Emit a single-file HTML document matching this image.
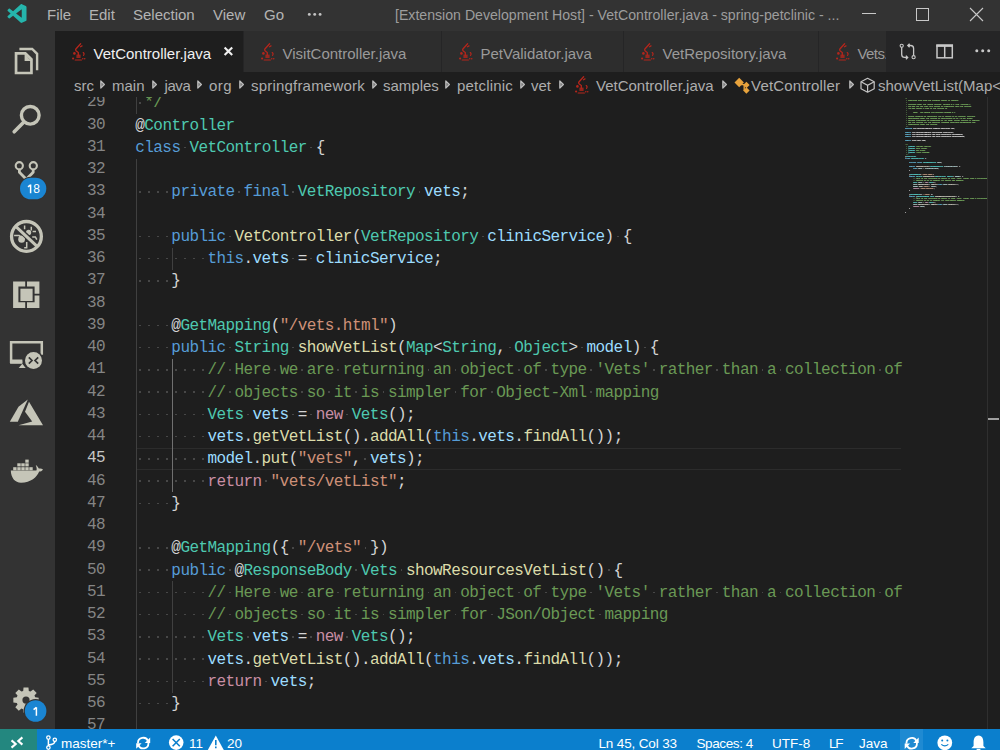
<!DOCTYPE html>
<html><head><meta charset="utf-8"><style>
*{margin:0;padding:0;box-sizing:border-box}
html,body{width:1000px;height:750px;overflow:hidden;background:#1e1e1e;font-family:"Liberation Sans",sans-serif}
.abs{position:absolute}
#title{position:absolute;left:0;top:0;width:1000px;height:31px;background:#333333}
.menu{position:absolute;top:0;height:31px;line-height:30px;font-size:15px;color:#b3b3b3}
#wtitle{position:absolute;top:0;height:31px;line-height:30px;font-size:14.13px;color:#9d9d9d;white-space:pre}
#act{position:absolute;left:0;top:31px;width:55px;height:698px;background:#333333}
#tabs{position:absolute;left:55px;top:31px;width:945px;height:41px;background:#252526}
.tab{position:absolute;top:31px;height:41px;background:#2d2d2d;border-right:1px solid #252526;overflow:hidden;white-space:nowrap}
.tab.act{background:#1e1e1e}
.ticon{position:absolute;left:17px;top:12px;width:14px;height:19px}
.ticon svg{display:block}
.ttl{position:absolute;left:38.5px;top:3px;line-height:40px;font-size:15px;color:#9a9a9a}
.tab.act .ttl{color:#f0f0f0}
.tclose{position:absolute;left:169px;top:0;line-height:40px;font-size:13px;font-weight:bold;color:#f0f0f0}
#bc{position:absolute;left:55px;top:72px;width:945px;height:25px;background:#1e1e1e;white-space:nowrap}
.bct{position:absolute;top:0;line-height:27px;font-size:15px;color:#adadad}
.chev{position:absolute;top:8px}
.chev svg{display:block}
#editor{position:absolute;left:55px;top:97px;width:945px;height:632px;overflow:hidden;background:#1e1e1e}
.ln{position:absolute;left:0;margin-top:-0.5px;width:50px;height:22.25px;line-height:22.25px;text-align:right;font-family:"Liberation Mono",monospace;font-size:16px;letter-spacing:-0.6px;color:#858585}
.ln.act{color:#c6c6c6}
.cl{position:absolute;left:80.3px;margin-top:0.5px;height:22.25px;line-height:22.25px;font-family:"Liberation Mono",monospace;font-size:16px;letter-spacing:-0.576px;white-space:pre;color:#d4d4d4}
.ws{display:inline-block;width:9.025px;height:22.25px;position:relative;vertical-align:top}
.ws::after{content:"";position:absolute;left:3.6px;top:9.8px;width:1.7px;height:1.7px;background:#474747}
.ig{position:absolute;width:1px;background:#404040}
.iga{background:#707070}
.curline{position:absolute;left:80.5px;width:765.5px;border-top:1px solid #2c2c2c;border-bottom:1px solid #2c2c2c}
#mmclip{position:absolute;left:849.8px;top:-0.2px;width:82.2px;height:140px;overflow:hidden;filter:brightness(1.35) contrast(1.1)}
#mmtext{position:absolute;left:0;top:0;font-family:"Liberation Mono",monospace;font-size:21px;font-weight:bold;letter-spacing:-3.6px;line-height:18px;white-space:pre;color:#d4d4d4;transform:scale(0.1111);transform-origin:0 0;opacity:1}
#vs{position:absolute;left:932px;top:0;width:12px;height:632px;border-left:1px solid #2f2f2f}
#status{position:absolute;left:0;top:729px;width:1000px;height:21px;background:#0b7fcd;color:#fff;font-size:13.5px;white-space:nowrap}
.st{position:absolute;top:4px;line-height:21px}
</style></head><body>
<div id="title">
 <svg class="abs" style="left:7px;top:4px" width="20" height="19" viewBox="0 0 100 100"><path fill="#25b5ac" d="M96.46 10.8L75.86 0.87C73.48-0.28 70.62 0.2 68.75 2.07L29.35 38.04L12.19 25.01C10.59 23.8 8.36 23.9 6.88 25.25L1.37 30.26C-0.45 31.92-0.45 34.78 1.36 36.44L16.25 50L1.36 63.56C-0.45 65.22-0.45 68.08 1.37 69.74L6.88 74.75C8.36 76.1 10.59 76.2 12.19 74.99L29.35 61.96L68.75 97.93C70.62 99.8 73.48 100.28 75.86 99.13L96.46 89.2C98.62 88.16 100 85.97 100 83.57V16.43C100 14.03 98.62 11.84 96.46 10.8ZM75.02 72.7L45.11 50L75.02 27.3V72.7Z"/></svg>
 <div class="menu" style="left:47px">File</div>
 <div class="menu" style="left:89px">Edit</div>
 <div class="menu" style="left:133px">Selection</div>
 <div class="menu" style="left:213px">View</div>
 <div class="menu" style="left:264px">Go</div>
 <div id="wtitle" style="left:395px">[Extension Development Host] - VetController.java - spring-petclinic - ...</div>
 <svg class="abs" style="left:862px;top:13px" width="14" height="1"><rect width="14" height="1" fill="#c8c8c8"/></svg>
 <svg class="abs" style="left:916px;top:8px" width="13" height="13"><rect x="0.5" y="0.5" width="12" height="12" fill="none" stroke="#c8c8c8"/></svg>
 <svg class="abs" style="left:969px;top:7px" width="15" height="15"><path d="M1 1L14 14M14 1L1 14" stroke="#c8c8c8" stroke-width="1.1"/></svg>
</div>
<div id="act"></div>
<div id="tabs"></div>
<div class="tab act" style="left:55px;width:189px"><span class="ticon"><svg width="14" height="19" viewBox="0 0 14 19"><g fill="none" stroke="#b3261c" stroke-width="1.3" stroke-linecap="round">
<path d="M8.6 0.8L3.9 6Q3.2 7 4.3 8L6.3 9.6V12.2"/>
<path d="M8.5 3.7L10 2.9"/>
<path d="M11.2 9.6Q12.8 10.8 11.5 12.3" stroke-width="1.2"/>
<path d="M3.2 17H9.4" stroke-width="1.2"/>
</g><g fill="#b3261c">
<circle cx="2.4" cy="10.4" r="1.3"/><rect x="4.4" y="11.6" width="4.2" height="3.4" opacity="0.8"/>
<circle cx="1.1" cy="15.5" r="1.1"/><circle cx="10.8" cy="15.8" r="0.8"/><circle cx="12.7" cy="15.8" r="0.8"/>
</g></svg></span><span class="ttl" style="letter-spacing:0px">VetController.java</span></div>
<div class="tab" style="left:244px;width:198px"><span class="ticon"><svg width="14" height="19" viewBox="0 0 14 19"><g fill="none" stroke="#b3261c" stroke-width="1.3" stroke-linecap="round">
<path d="M8.6 0.8L3.9 6Q3.2 7 4.3 8L6.3 9.6V12.2"/>
<path d="M8.5 3.7L10 2.9"/>
<path d="M11.2 9.6Q12.8 10.8 11.5 12.3" stroke-width="1.2"/>
<path d="M3.2 17H9.4" stroke-width="1.2"/>
</g><g fill="#b3261c">
<circle cx="2.4" cy="10.4" r="1.3"/><rect x="4.4" y="11.6" width="4.2" height="3.4" opacity="0.8"/>
<circle cx="1.1" cy="15.5" r="1.1"/><circle cx="10.8" cy="15.8" r="0.8"/><circle cx="12.7" cy="15.8" r="0.8"/>
</g></svg></span><span class="ttl" style="letter-spacing:0px">VisitController.java</span></div>
<div class="tab" style="left:442px;width:182px"><span class="ticon"><svg width="14" height="19" viewBox="0 0 14 19"><g fill="none" stroke="#b3261c" stroke-width="1.3" stroke-linecap="round">
<path d="M8.6 0.8L3.9 6Q3.2 7 4.3 8L6.3 9.6V12.2"/>
<path d="M8.5 3.7L10 2.9"/>
<path d="M11.2 9.6Q12.8 10.8 11.5 12.3" stroke-width="1.2"/>
<path d="M3.2 17H9.4" stroke-width="1.2"/>
</g><g fill="#b3261c">
<circle cx="2.4" cy="10.4" r="1.3"/><rect x="4.4" y="11.6" width="4.2" height="3.4" opacity="0.8"/>
<circle cx="1.1" cy="15.5" r="1.1"/><circle cx="10.8" cy="15.8" r="0.8"/><circle cx="12.7" cy="15.8" r="0.8"/>
</g></svg></span><span class="ttl" style="letter-spacing:0px">PetValidator.java</span></div>
<div class="tab" style="left:624px;width:195px"><span class="ticon"><svg width="14" height="19" viewBox="0 0 14 19"><g fill="none" stroke="#b3261c" stroke-width="1.3" stroke-linecap="round">
<path d="M8.6 0.8L3.9 6Q3.2 7 4.3 8L6.3 9.6V12.2"/>
<path d="M8.5 3.7L10 2.9"/>
<path d="M11.2 9.6Q12.8 10.8 11.5 12.3" stroke-width="1.2"/>
<path d="M3.2 17H9.4" stroke-width="1.2"/>
</g><g fill="#b3261c">
<circle cx="2.4" cy="10.4" r="1.3"/><rect x="4.4" y="11.6" width="4.2" height="3.4" opacity="0.8"/>
<circle cx="1.1" cy="15.5" r="1.1"/><circle cx="10.8" cy="15.8" r="0.8"/><circle cx="12.7" cy="15.8" r="0.8"/>
</g></svg></span><span class="ttl" style="letter-spacing:0px">VetRepository.java</span></div>
<div class="tab" style="left:819px;width:68px"><span class="ticon"><svg width="14" height="19" viewBox="0 0 14 19"><g fill="none" stroke="#b3261c" stroke-width="1.3" stroke-linecap="round">
<path d="M8.6 0.8L3.9 6Q3.2 7 4.3 8L6.3 9.6V12.2"/>
<path d="M8.5 3.7L10 2.9"/>
<path d="M11.2 9.6Q12.8 10.8 11.5 12.3" stroke-width="1.2"/>
<path d="M3.2 17H9.4" stroke-width="1.2"/>
</g><g fill="#b3261c">
<circle cx="2.4" cy="10.4" r="1.3"/><rect x="4.4" y="11.6" width="4.2" height="3.4" opacity="0.8"/>
<circle cx="1.1" cy="15.5" r="1.1"/><circle cx="10.8" cy="15.8" r="0.8"/><circle cx="12.7" cy="15.8" r="0.8"/>
</g></svg></span><span class="ttl" style="letter-spacing:-0.6px">Vets.java</span></div>
<div id="bc">
 <div class="bct" style="left:19px">src</div>
 <div class="chev" style="left:45px"><svg width="5" height="9" viewBox="0 0 5 9"><path d="M0.8 0.9L4.4 4.5L0.8 8.1Z" fill="#7a7a7a" stroke="#bdbdbd" stroke-width="1.2" stroke-linejoin="round"/></svg></div>
 <div class="bct" style="left:57px">main</div>
 <div class="chev" style="left:97px"><svg width="5" height="9" viewBox="0 0 5 9"><path d="M0.8 0.9L4.4 4.5L0.8 8.1Z" fill="#7a7a7a" stroke="#bdbdbd" stroke-width="1.2" stroke-linejoin="round"/></svg></div>
 <div class="bct" style="left:109.5px;letter-spacing:-0.4px">java</div>
 <div class="chev" style="left:142px"><svg width="5" height="9" viewBox="0 0 5 9"><path d="M0.8 0.9L4.4 4.5L0.8 8.1Z" fill="#7a7a7a" stroke="#bdbdbd" stroke-width="1.2" stroke-linejoin="round"/></svg></div>
 <div class="bct" style="left:154px;letter-spacing:0.4px">org</div>
 <div class="chev" style="left:184px"><svg width="5" height="9" viewBox="0 0 5 9"><path d="M0.8 0.9L4.4 4.5L0.8 8.1Z" fill="#7a7a7a" stroke="#bdbdbd" stroke-width="1.2" stroke-linejoin="round"/></svg></div>
 <div class="bct" style="left:196px;letter-spacing:0.2px">springframework</div>
 <div class="chev" style="left:317px"><svg width="5" height="9" viewBox="0 0 5 9"><path d="M0.8 0.9L4.4 4.5L0.8 8.1Z" fill="#7a7a7a" stroke="#bdbdbd" stroke-width="1.2" stroke-linejoin="round"/></svg></div>
 <div class="bct" style="left:328px">samples</div>
 <div class="chev" style="left:390px"><svg width="5" height="9" viewBox="0 0 5 9"><path d="M0.8 0.9L4.4 4.5L0.8 8.1Z" fill="#7a7a7a" stroke="#bdbdbd" stroke-width="1.2" stroke-linejoin="round"/></svg></div>
 <div class="bct" style="left:402px;letter-spacing:0.2px">petclinic</div>
 <div class="chev" style="left:465px"><svg width="5" height="9" viewBox="0 0 5 9"><path d="M0.8 0.9L4.4 4.5L0.8 8.1Z" fill="#7a7a7a" stroke="#bdbdbd" stroke-width="1.2" stroke-linejoin="round"/></svg></div>
 <div class="bct" style="left:476px">vet</div>
 <div class="chev" style="left:504px"><svg width="5" height="9" viewBox="0 0 5 9"><path d="M0.8 0.9L4.4 4.5L0.8 8.1Z" fill="#7a7a7a" stroke="#bdbdbd" stroke-width="1.2" stroke-linejoin="round"/></svg></div>
 <div class="abs" style="left:520px;top:4px"><svg width="14" height="19" viewBox="0 0 14 19"><g fill="none" stroke="#b3261c" stroke-width="1.3" stroke-linecap="round">
<path d="M8.6 0.8L3.9 6Q3.2 7 4.3 8L6.3 9.6V12.2"/>
<path d="M8.5 3.7L10 2.9"/>
<path d="M11.2 9.6Q12.8 10.8 11.5 12.3" stroke-width="1.2"/>
<path d="M3.2 17H9.4" stroke-width="1.2"/>
</g><g fill="#b3261c">
<circle cx="2.4" cy="10.4" r="1.3"/><rect x="4.4" y="11.6" width="4.2" height="3.4" opacity="0.8"/>
<circle cx="1.1" cy="15.5" r="1.1"/><circle cx="10.8" cy="15.8" r="0.8"/><circle cx="12.7" cy="15.8" r="0.8"/>
</g></svg></div>
 <div class="bct" style="left:541px">VetController.java</div>
 <div class="chev" style="left:667px"><svg width="5" height="9" viewBox="0 0 5 9"><path d="M0.8 0.9L4.4 4.5L0.8 8.1Z" fill="#7a7a7a" stroke="#bdbdbd" stroke-width="1.2" stroke-linejoin="round"/></svg></div>
 <div class="bct" style="left:696px;letter-spacing:0.2px">VetController</div>
 <div class="chev" style="left:794px"><svg width="5" height="9" viewBox="0 0 5 9"><path d="M0.8 0.9L4.4 4.5L0.8 8.1Z" fill="#7a7a7a" stroke="#bdbdbd" stroke-width="1.2" stroke-linejoin="round"/></svg></div>
 <div class="bct" style="left:823px">showVetList(Map&lt;String, Object&gt; model)</div>
</div>
<div id="editor">
 <div class="curline" style="top:350.75px;height:22.25px"></div>
 <div class="ig" style="left:81.1px;top:-5.25px;height:22.25px"></div>
<div class="ig" style="left:81.1px;top:61.50px;height:578.50px"></div>
<div class="ig" style="left:117.2px;top:150.50px;height:22.25px"></div>
<div class="ig iga" style="left:117.2px;top:261.75px;height:133.50px"></div>
<div class="ig" style="left:117.2px;top:484.25px;height:111.25px"></div>
 <div class="ln" style="top:-5.25px">29</div>
<div class="cl" style="top:-5.25px"><i class="ws"></i><span style="color:#6a9955">*/</span></div>
<div class="ln" style="top:17.00px">30</div>
<div class="cl" style="top:17.00px"><span style="color:#d4d4d4">@</span><span style="color:#4ec9b0">Controller</span></div>
<div class="ln" style="top:39.25px">31</div>
<div class="cl" style="top:39.25px"><span style="color:#569cd6">class</span><i class="ws"></i><span style="color:#4ec9b0">VetController</span><i class="ws"></i><span style="color:#d4d4d4">{</span></div>
<div class="ln" style="top:61.50px">32</div>
<div class="cl" style="top:61.50px"></div>
<div class="ln" style="top:83.75px">33</div>
<div class="cl" style="top:83.75px"><i class="ws"></i><i class="ws"></i><i class="ws"></i><i class="ws"></i><span style="color:#569cd6">private</span><i class="ws"></i><span style="color:#569cd6">final</span><i class="ws"></i><span style="color:#4ec9b0">VetRepository</span><i class="ws"></i><span style="color:#9cdcfe">vets</span><span style="color:#d4d4d4">;</span></div>
<div class="ln" style="top:106.00px">34</div>
<div class="cl" style="top:106.00px"></div>
<div class="ln" style="top:128.25px">35</div>
<div class="cl" style="top:128.25px"><i class="ws"></i><i class="ws"></i><i class="ws"></i><i class="ws"></i><span style="color:#569cd6">public</span><i class="ws"></i><span style="color:#dcdcaa">VetController</span><span style="color:#d4d4d4">(</span><span style="color:#4ec9b0">VetRepository</span><i class="ws"></i><span style="color:#9cdcfe">clinicService</span><span style="color:#d4d4d4">)</span><i class="ws"></i><span style="color:#d4d4d4">{</span></div>
<div class="ln" style="top:150.50px">36</div>
<div class="cl" style="top:150.50px"><i class="ws"></i><i class="ws"></i><i class="ws"></i><i class="ws"></i><i class="ws"></i><i class="ws"></i><i class="ws"></i><i class="ws"></i><span style="color:#569cd6">this</span><span style="color:#d4d4d4">.</span><span style="color:#9cdcfe">vets</span><i class="ws"></i><span style="color:#d4d4d4">=</span><i class="ws"></i><span style="color:#9cdcfe">clinicService</span><span style="color:#d4d4d4">;</span></div>
<div class="ln" style="top:172.75px">37</div>
<div class="cl" style="top:172.75px"><i class="ws"></i><i class="ws"></i><i class="ws"></i><i class="ws"></i><span style="color:#d4d4d4">}</span></div>
<div class="ln" style="top:195.00px">38</div>
<div class="cl" style="top:195.00px"></div>
<div class="ln" style="top:217.25px">39</div>
<div class="cl" style="top:217.25px"><i class="ws"></i><i class="ws"></i><i class="ws"></i><i class="ws"></i><span style="color:#d4d4d4">@</span><span style="color:#4ec9b0">GetMapping</span><span style="color:#d4d4d4">(</span><span style="color:#ce9178">&quot;/vets.html&quot;</span><span style="color:#d4d4d4">)</span></div>
<div class="ln" style="top:239.50px">40</div>
<div class="cl" style="top:239.50px"><i class="ws"></i><i class="ws"></i><i class="ws"></i><i class="ws"></i><span style="color:#569cd6">public</span><i class="ws"></i><span style="color:#4ec9b0">String</span><i class="ws"></i><span style="color:#dcdcaa">showVetList</span><span style="color:#d4d4d4">(</span><span style="color:#4ec9b0">Map</span><span style="color:#d4d4d4">&lt;</span><span style="color:#4ec9b0">String</span><span style="color:#d4d4d4">,</span><i class="ws"></i><span style="color:#4ec9b0">Object</span><span style="color:#d4d4d4">&gt;</span><i class="ws"></i><span style="color:#9cdcfe">model</span><span style="color:#d4d4d4">)</span><i class="ws"></i><span style="color:#d4d4d4">{</span></div>
<div class="ln" style="top:261.75px">41</div>
<div class="cl" style="top:261.75px"><i class="ws"></i><i class="ws"></i><i class="ws"></i><i class="ws"></i><i class="ws"></i><i class="ws"></i><i class="ws"></i><i class="ws"></i><span style="color:#6a9955">//</span><i class="ws"></i><span style="color:#6a9955">Here</span><i class="ws"></i><span style="color:#6a9955">we</span><i class="ws"></i><span style="color:#6a9955">are</span><i class="ws"></i><span style="color:#6a9955">returning</span><i class="ws"></i><span style="color:#6a9955">an</span><i class="ws"></i><span style="color:#6a9955">object</span><i class="ws"></i><span style="color:#6a9955">of</span><i class="ws"></i><span style="color:#6a9955">type</span><i class="ws"></i><span style="color:#6a9955">&#x27;Vets&#x27;</span><i class="ws"></i><span style="color:#6a9955">rather</span><i class="ws"></i><span style="color:#6a9955">than</span><i class="ws"></i><span style="color:#6a9955">a</span><i class="ws"></i><span style="color:#6a9955">collection</span><i class="ws"></i><span style="color:#6a9955">of</span></div>
<div class="ln" style="top:284.00px">42</div>
<div class="cl" style="top:284.00px"><i class="ws"></i><i class="ws"></i><i class="ws"></i><i class="ws"></i><i class="ws"></i><i class="ws"></i><i class="ws"></i><i class="ws"></i><span style="color:#6a9955">//</span><i class="ws"></i><span style="color:#6a9955">objects</span><i class="ws"></i><span style="color:#6a9955">so</span><i class="ws"></i><span style="color:#6a9955">it</span><i class="ws"></i><span style="color:#6a9955">is</span><i class="ws"></i><span style="color:#6a9955">simpler</span><i class="ws"></i><span style="color:#6a9955">for</span><i class="ws"></i><span style="color:#6a9955">Object-Xml</span><i class="ws"></i><span style="color:#6a9955">mapping</span></div>
<div class="ln" style="top:306.25px">43</div>
<div class="cl" style="top:306.25px"><i class="ws"></i><i class="ws"></i><i class="ws"></i><i class="ws"></i><i class="ws"></i><i class="ws"></i><i class="ws"></i><i class="ws"></i><span style="color:#4ec9b0">Vets</span><i class="ws"></i><span style="color:#9cdcfe">vets</span><i class="ws"></i><span style="color:#d4d4d4">=</span><i class="ws"></i><span style="color:#c98ea4">new</span><i class="ws"></i><span style="color:#4ec9b0">Vets</span><span style="color:#d4d4d4">();</span></div>
<div class="ln" style="top:328.50px">44</div>
<div class="cl" style="top:328.50px"><i class="ws"></i><i class="ws"></i><i class="ws"></i><i class="ws"></i><i class="ws"></i><i class="ws"></i><i class="ws"></i><i class="ws"></i><span style="color:#9cdcfe">vets</span><span style="color:#d4d4d4">.</span><span style="color:#dcdcaa">getVetList</span><span style="color:#d4d4d4">().</span><span style="color:#dcdcaa">addAll</span><span style="color:#d4d4d4">(</span><span style="color:#569cd6">this</span><span style="color:#d4d4d4">.</span><span style="color:#9cdcfe">vets</span><span style="color:#d4d4d4">.</span><span style="color:#dcdcaa">findAll</span><span style="color:#d4d4d4">());</span></div>
<div class="ln act" style="top:350.75px">45</div>
<div class="cl" style="top:350.75px"><i class="ws"></i><i class="ws"></i><i class="ws"></i><i class="ws"></i><i class="ws"></i><i class="ws"></i><i class="ws"></i><i class="ws"></i><span style="color:#9cdcfe">model</span><span style="color:#d4d4d4">.</span><span style="color:#dcdcaa">put</span><span style="color:#d4d4d4">(</span><span style="color:#ce9178">&quot;vets&quot;</span><span style="color:#d4d4d4">,</span><i class="ws"></i><span style="color:#9cdcfe">vets</span><span style="color:#d4d4d4">);</span></div>
<div class="ln" style="top:373.00px">46</div>
<div class="cl" style="top:373.00px"><i class="ws"></i><i class="ws"></i><i class="ws"></i><i class="ws"></i><i class="ws"></i><i class="ws"></i><i class="ws"></i><i class="ws"></i><span style="color:#c98ea4">return</span><i class="ws"></i><span style="color:#ce9178">&quot;vets/vetList&quot;</span><span style="color:#d4d4d4">;</span></div>
<div class="ln" style="top:395.25px">47</div>
<div class="cl" style="top:395.25px"><i class="ws"></i><i class="ws"></i><i class="ws"></i><i class="ws"></i><span style="color:#d4d4d4">}</span></div>
<div class="ln" style="top:417.50px">48</div>
<div class="cl" style="top:417.50px"></div>
<div class="ln" style="top:439.75px">49</div>
<div class="cl" style="top:439.75px"><i class="ws"></i><i class="ws"></i><i class="ws"></i><i class="ws"></i><span style="color:#d4d4d4">@</span><span style="color:#4ec9b0">GetMapping</span><span style="color:#d4d4d4">({</span><i class="ws"></i><span style="color:#ce9178">&quot;/vets&quot;</span><i class="ws"></i><span style="color:#d4d4d4">})</span></div>
<div class="ln" style="top:462.00px">50</div>
<div class="cl" style="top:462.00px"><i class="ws"></i><i class="ws"></i><i class="ws"></i><i class="ws"></i><span style="color:#569cd6">public</span><i class="ws"></i><span style="color:#d4d4d4">@</span><span style="color:#4ec9b0">ResponseBody</span><i class="ws"></i><span style="color:#4ec9b0">Vets</span><i class="ws"></i><span style="color:#dcdcaa">showResourcesVetList</span><span style="color:#d4d4d4">()</span><i class="ws"></i><span style="color:#d4d4d4">{</span></div>
<div class="ln" style="top:484.25px">51</div>
<div class="cl" style="top:484.25px"><i class="ws"></i><i class="ws"></i><i class="ws"></i><i class="ws"></i><i class="ws"></i><i class="ws"></i><i class="ws"></i><i class="ws"></i><span style="color:#6a9955">//</span><i class="ws"></i><span style="color:#6a9955">Here</span><i class="ws"></i><span style="color:#6a9955">we</span><i class="ws"></i><span style="color:#6a9955">are</span><i class="ws"></i><span style="color:#6a9955">returning</span><i class="ws"></i><span style="color:#6a9955">an</span><i class="ws"></i><span style="color:#6a9955">object</span><i class="ws"></i><span style="color:#6a9955">of</span><i class="ws"></i><span style="color:#6a9955">type</span><i class="ws"></i><span style="color:#6a9955">&#x27;Vets&#x27;</span><i class="ws"></i><span style="color:#6a9955">rather</span><i class="ws"></i><span style="color:#6a9955">than</span><i class="ws"></i><span style="color:#6a9955">a</span><i class="ws"></i><span style="color:#6a9955">collection</span><i class="ws"></i><span style="color:#6a9955">of</span></div>
<div class="ln" style="top:506.50px">52</div>
<div class="cl" style="top:506.50px"><i class="ws"></i><i class="ws"></i><i class="ws"></i><i class="ws"></i><i class="ws"></i><i class="ws"></i><i class="ws"></i><i class="ws"></i><span style="color:#6a9955">//</span><i class="ws"></i><span style="color:#6a9955">objects</span><i class="ws"></i><span style="color:#6a9955">so</span><i class="ws"></i><span style="color:#6a9955">it</span><i class="ws"></i><span style="color:#6a9955">is</span><i class="ws"></i><span style="color:#6a9955">simpler</span><i class="ws"></i><span style="color:#6a9955">for</span><i class="ws"></i><span style="color:#6a9955">JSon/Object</span><i class="ws"></i><span style="color:#6a9955">mapping</span></div>
<div class="ln" style="top:528.75px">53</div>
<div class="cl" style="top:528.75px"><i class="ws"></i><i class="ws"></i><i class="ws"></i><i class="ws"></i><i class="ws"></i><i class="ws"></i><i class="ws"></i><i class="ws"></i><span style="color:#4ec9b0">Vets</span><i class="ws"></i><span style="color:#9cdcfe">vets</span><i class="ws"></i><span style="color:#d4d4d4">=</span><i class="ws"></i><span style="color:#c98ea4">new</span><i class="ws"></i><span style="color:#4ec9b0">Vets</span><span style="color:#d4d4d4">();</span></div>
<div class="ln" style="top:551.00px">54</div>
<div class="cl" style="top:551.00px"><i class="ws"></i><i class="ws"></i><i class="ws"></i><i class="ws"></i><i class="ws"></i><i class="ws"></i><i class="ws"></i><i class="ws"></i><span style="color:#9cdcfe">vets</span><span style="color:#d4d4d4">.</span><span style="color:#dcdcaa">getVetList</span><span style="color:#d4d4d4">().</span><span style="color:#dcdcaa">addAll</span><span style="color:#d4d4d4">(</span><span style="color:#569cd6">this</span><span style="color:#d4d4d4">.</span><span style="color:#9cdcfe">vets</span><span style="color:#d4d4d4">.</span><span style="color:#dcdcaa">findAll</span><span style="color:#d4d4d4">());</span></div>
<div class="ln" style="top:573.25px">55</div>
<div class="cl" style="top:573.25px"><i class="ws"></i><i class="ws"></i><i class="ws"></i><i class="ws"></i><i class="ws"></i><i class="ws"></i><i class="ws"></i><i class="ws"></i><span style="color:#c98ea4">return</span><i class="ws"></i><span style="color:#9cdcfe">vets</span><span style="color:#d4d4d4">;</span></div>
<div class="ln" style="top:595.50px">56</div>
<div class="cl" style="top:595.50px"><i class="ws"></i><i class="ws"></i><i class="ws"></i><i class="ws"></i><span style="color:#d4d4d4">}</span></div>
<div class="ln" style="top:617.75px">57</div>
<div class="cl" style="top:617.75px"></div>
 <div id="mmclip"><div id="mmtext"><span style="color:#6a9955">/*</span>
<span style="color:#6a9955"> * Copyright 2012-2018 the original author or authors.</span>
<span style="color:#6a9955"> *</span>
<span style="color:#6a9955"> * Licensed under the Apache License, Version 2.0 (the &quot;License&quot;);</span>
<span style="color:#6a9955"> * you may not use this file except in compliance with the License.</span>
<span style="color:#6a9955"> * You may obtain a copy of the License at</span>
<span style="color:#6a9955"> *</span>
<span style="color:#6a9955"> *      hxxp:--www-apache-org/licenses/LICENSE-2.0</span>
<span style="color:#6a9955"> *</span>
<span style="color:#6a9955"> * Unless required by applicable law or agreed to in writing, software</span>
<span style="color:#6a9955"> * distributed under the License is distributed on an &quot;AS IS&quot; BASIS,</span>
<span style="color:#6a9955"> * WITHOUT WARRANTIES OR CONDITIONS OF ANY KIND, either express or implied.</span>
<span style="color:#6a9955"> * See the License for the specific language governing permissions and</span>
<span style="color:#6a9955"> * limitations under the License.</span>
<span style="color:#6a9955"> */</span>
<span style="color:#569cd6">package</span><span style="color:#d4d4d4"> org.springframework.samples.petclinic.vet;</span>

<span style="color:#569cd6">import</span><span style="color:#d4d4d4"> org.springframework.stereotype.Controller;</span>
<span style="color:#569cd6">import</span><span style="color:#d4d4d4"> org.springframework.web.bind.annotation.GetMapping;</span>
<span style="color:#569cd6">import</span><span style="color:#d4d4d4"> org.springframework.web.bind.annotation.ResponseBody;</span>

<span style="color:#569cd6">import</span><span style="color:#d4d4d4"> java.util.Map;</span>

<span style="color:#6a9955">/**</span>
<span style="color:#6a9955"> * </span><span style="color:#4ec9b0">@author</span><span style="color:#6a9955"> Juergen Hoeller</span>
<span style="color:#6a9955"> * </span><span style="color:#4ec9b0">@author</span><span style="color:#6a9955"> Mark Fisher</span>
<span style="color:#6a9955"> * </span><span style="color:#4ec9b0">@author</span><span style="color:#6a9955"> Ken Krebs</span>
<span style="color:#6a9955"> * </span><span style="color:#4ec9b0">@author</span><span style="color:#6a9955"> Arjen Poutsma</span>
 <span style="color:#6a9955">*/</span>
<span style="color:#d4d4d4">@</span><span style="color:#4ec9b0">Controller</span>
<span style="color:#569cd6">class</span> <span style="color:#4ec9b0">VetController</span> <span style="color:#d4d4d4">{</span>

    <span style="color:#569cd6">private</span> <span style="color:#569cd6">final</span> <span style="color:#4ec9b0">VetRepository</span> <span style="color:#9cdcfe">vets</span><span style="color:#d4d4d4">;</span>

    <span style="color:#569cd6">public</span> <span style="color:#dcdcaa">VetController</span><span style="color:#d4d4d4">(</span><span style="color:#4ec9b0">VetRepository</span> <span style="color:#9cdcfe">clinicService</span><span style="color:#d4d4d4">)</span> <span style="color:#d4d4d4">{</span>
        <span style="color:#569cd6">this</span><span style="color:#d4d4d4">.</span><span style="color:#9cdcfe">vets</span> <span style="color:#d4d4d4">=</span> <span style="color:#9cdcfe">clinicService</span><span style="color:#d4d4d4">;</span>
    <span style="color:#d4d4d4">}</span>

    <span style="color:#d4d4d4">@</span><span style="color:#4ec9b0">GetMapping</span><span style="color:#d4d4d4">(</span><span style="color:#ce9178">&quot;/vets.html&quot;</span><span style="color:#d4d4d4">)</span>
    <span style="color:#569cd6">public</span> <span style="color:#4ec9b0">String</span> <span style="color:#dcdcaa">showVetList</span><span style="color:#d4d4d4">(</span><span style="color:#4ec9b0">Map</span><span style="color:#d4d4d4">&lt;</span><span style="color:#4ec9b0">String</span><span style="color:#d4d4d4">,</span> <span style="color:#4ec9b0">Object</span><span style="color:#d4d4d4">&gt;</span> <span style="color:#9cdcfe">model</span><span style="color:#d4d4d4">)</span> <span style="color:#d4d4d4">{</span>
        <span style="color:#6a9955">//</span> <span style="color:#6a9955">Here</span> <span style="color:#6a9955">we</span> <span style="color:#6a9955">are</span> <span style="color:#6a9955">returning</span> <span style="color:#6a9955">an</span> <span style="color:#6a9955">object</span> <span style="color:#6a9955">of</span> <span style="color:#6a9955">type</span> <span style="color:#6a9955">&#x27;Vets&#x27;</span> <span style="color:#6a9955">rather</span> <span style="color:#6a9955">than</span> <span style="color:#6a9955">a</span> <span style="color:#6a9955">collection</span> <span style="color:#6a9955">of</span>
        <span style="color:#6a9955">//</span> <span style="color:#6a9955">objects</span> <span style="color:#6a9955">so</span> <span style="color:#6a9955">it</span> <span style="color:#6a9955">is</span> <span style="color:#6a9955">simpler</span> <span style="color:#6a9955">for</span> <span style="color:#6a9955">Object-Xml</span> <span style="color:#6a9955">mapping</span>
        <span style="color:#4ec9b0">Vets</span> <span style="color:#9cdcfe">vets</span> <span style="color:#d4d4d4">=</span> <span style="color:#c98ea4">new</span> <span style="color:#4ec9b0">Vets</span><span style="color:#d4d4d4">();</span>
        <span style="color:#9cdcfe">vets</span><span style="color:#d4d4d4">.</span><span style="color:#dcdcaa">getVetList</span><span style="color:#d4d4d4">().</span><span style="color:#dcdcaa">addAll</span><span style="color:#d4d4d4">(</span><span style="color:#569cd6">this</span><span style="color:#d4d4d4">.</span><span style="color:#9cdcfe">vets</span><span style="color:#d4d4d4">.</span><span style="color:#dcdcaa">findAll</span><span style="color:#d4d4d4">());</span>
        <span style="color:#9cdcfe">model</span><span style="color:#d4d4d4">.</span><span style="color:#dcdcaa">put</span><span style="color:#d4d4d4">(</span><span style="color:#ce9178">&quot;vets&quot;</span><span style="color:#d4d4d4">,</span> <span style="color:#9cdcfe">vets</span><span style="color:#d4d4d4">);</span>
        <span style="color:#c98ea4">return</span> <span style="color:#ce9178">&quot;vets/vetList&quot;</span><span style="color:#d4d4d4">;</span>
    <span style="color:#d4d4d4">}</span>

    <span style="color:#d4d4d4">@</span><span style="color:#4ec9b0">GetMapping</span><span style="color:#d4d4d4">({</span> <span style="color:#ce9178">&quot;/vets&quot;</span> <span style="color:#d4d4d4">})</span>
    <span style="color:#569cd6">public</span> <span style="color:#d4d4d4">@</span><span style="color:#4ec9b0">ResponseBody</span> <span style="color:#4ec9b0">Vets</span> <span style="color:#dcdcaa">showResourcesVetList</span><span style="color:#d4d4d4">()</span> <span style="color:#d4d4d4">{</span>
        <span style="color:#6a9955">//</span> <span style="color:#6a9955">Here</span> <span style="color:#6a9955">we</span> <span style="color:#6a9955">are</span> <span style="color:#6a9955">returning</span> <span style="color:#6a9955">an</span> <span style="color:#6a9955">object</span> <span style="color:#6a9955">of</span> <span style="color:#6a9955">type</span> <span style="color:#6a9955">&#x27;Vets&#x27;</span> <span style="color:#6a9955">rather</span> <span style="color:#6a9955">than</span> <span style="color:#6a9955">a</span> <span style="color:#6a9955">collection</span> <span style="color:#6a9955">of</span>
        <span style="color:#6a9955">//</span> <span style="color:#6a9955">objects</span> <span style="color:#6a9955">so</span> <span style="color:#6a9955">it</span> <span style="color:#6a9955">is</span> <span style="color:#6a9955">simpler</span> <span style="color:#6a9955">for</span> <span style="color:#6a9955">JSon/Object</span> <span style="color:#6a9955">mapping</span>
        <span style="color:#4ec9b0">Vets</span> <span style="color:#9cdcfe">vets</span> <span style="color:#d4d4d4">=</span> <span style="color:#c98ea4">new</span> <span style="color:#4ec9b0">Vets</span><span style="color:#d4d4d4">();</span>
        <span style="color:#9cdcfe">vets</span><span style="color:#d4d4d4">.</span><span style="color:#dcdcaa">getVetList</span><span style="color:#d4d4d4">().</span><span style="color:#dcdcaa">addAll</span><span style="color:#d4d4d4">(</span><span style="color:#569cd6">this</span><span style="color:#d4d4d4">.</span><span style="color:#9cdcfe">vets</span><span style="color:#d4d4d4">.</span><span style="color:#dcdcaa">findAll</span><span style="color:#d4d4d4">());</span>
        <span style="color:#c98ea4">return</span> <span style="color:#9cdcfe">vets</span><span style="color:#d4d4d4">;</span>
    <span style="color:#d4d4d4">}</span>

<span style="color:#d4d4d4">}</span>
</div></div>
 <div id="vs"><div class="abs" style="left:0;top:321px;width:11px;height:2px;background:#a0a0a0"></div></div>
</div>
<div id="status">
 <div class="abs" style="left:0;top:0;width:37px;height:21px;background:#23877f"></div>
 <div class="st" style="left:61px">master*+</div>
 <div class="st" style="left:189px">11</div>
 <div class="st" style="left:227px">20</div>
 <div class="st" style="left:598.5px;letter-spacing:-0.15px">Ln 45, Col 33</div>
 <div class="st" style="left:696.5px;letter-spacing:-0.4px">Spaces: 4</div>
 <div class="st" style="left:772px">UTF-8</div>
 <div class="st" style="left:829px;letter-spacing:-1.2px">LF</div>
 <div class="st" style="left:859px">Java</div>
 <div class="abs" style="left:900px;top:0;width:23px;height:21px;background:#1f8ad2"></div>
</div>
<svg style="position:absolute;left:0;top:0" width="1000" height="750" viewBox="0 0 1000 750"><path d="M16.05 53.3H25.4L31.45 59.35V73H16.05Z" fill="none" stroke="#c5c5b8" stroke-width="2.7" stroke-linejoin="miter"/>
<path d="M25.3 54.2V60.5H30.4Z" fill="#c5c5b8"/><path d="M25.4 53.3V60.3H31.4" fill="none" stroke="#c5c5b8" stroke-width="1.6"/>
<path d="M19.4 48.95H32.2L37.1 53.85V70.2" fill="none" stroke="#c5c5b8" stroke-width="2.4"/>
<circle cx="30.25" cy="115.3" r="8.85" fill="none" stroke="#c5c5b8" stroke-width="3.4"/>
<path d="M23.4 122.6L14.2 131.8" stroke="#c5c5b8" stroke-width="3.6" stroke-linecap="round"/>
<circle cx="19.3" cy="165.7" r="3.6" fill="none" stroke="#c5c5b8" stroke-width="2.1"/>
<circle cx="33.3" cy="165.7" r="3.6" fill="none" stroke="#c5c5b8" stroke-width="2.1"/>
<path d="M19.4 169.5V172.3L26 179M33.2 169.5V172.3L26.6 179" fill="none" stroke="#c5c5b8" stroke-width="2.8" stroke-linejoin="round"/>
<rect x="19" y="176.7" width="28.3" height="23.6" rx="11.8" fill="#333333"/>
<rect x="20" y="177.7" width="26.3" height="21.6" rx="10.8" fill="#1a85d2"/>
<path d="M30.6 184.6V193.2M30.6 184.8L28 186.9" fill="none" stroke="#ffffff" stroke-width="1.5"/>
<text x="33.2" y="193.1" font-family="Liberation Sans" font-size="12" fill="#ffffff">8</text>
<ellipse cx="21.6" cy="239.2" rx="3.4" ry="3.6" fill="#c5c5b8"/>
<circle cx="28.6" cy="232.4" r="2.6" fill="#c5c5b8"/>
<path d="M24.6 225.4V229.2M31.3 226.8V230.6M32.6 231.4H36M32.2 236.9H35.4L36.8 239.6M14.1 235.5H19.2L20.4 236.6M26.7 242V247.8H24.2" fill="none" stroke="#c5c5b8" stroke-width="1.5"/>
<path d="M14.2 224.6L37.8 246.8" stroke="#333333" stroke-width="5.4"/>
<path d="M15.2 225.8L36.8 246.2" stroke="#c5c5b8" stroke-width="3"/>
<circle cx="26.45" cy="236.4" r="14.9" fill="none" stroke="#c5c5b8" stroke-width="3.3"/>
<path d="M13.1 281.6H25.2V286.6H18.4V302.3H25.2V307.9H13.1Z" fill="#c5c5b8"/>
<path d="M27 281.6H39.4V293.7H34.6V286.6H27Z" fill="#c5c5b8"/>
<path d="M27 302.3H34.6V295.5H39.4V307.9H27Z" fill="#c5c5b8"/>
<rect x="20.4" y="288.7" width="12.2" height="12.3" fill="#c5c5b8"/>
<path d="M22.3 361.7H11.1V342.3H41.8V354.7" fill="none" stroke="#c5c5b8" stroke-width="2.5"/>
<rect x="10.1" y="359.5" width="12.2" height="4.3" fill="#c5c5b8"/>
<path d="M18.7 367.9L22.3 363.8L25.7 367.9Z" fill="#c5c5b8"/>
<circle cx="33.5" cy="360.5" r="10" fill="#333333"/>
<circle cx="33.5" cy="360.5" r="8.5" fill="#c5c5b8"/>
<path d="M28.8 357.3L32 360.5L28.8 363.7M38.2 357.3L35 360.5L38.2 363.7" fill="none" stroke="#333333" stroke-width="1.7"/>
<path d="M27.8 399.5L18.5 406.8L9.8 421.8H17.8Z" fill="#c5c5b8"/>
<path d="M29 401.7L25 411.8L32.2 421.4L18.5 425.2H43Z" fill="#c5c5b8"/>
<path d="M10.8 470.6H36.4C37.2 469 36.2 466.5 35.8 465C37.2 465.8 38.4 467.6 38.8 468.6C40.4 468.2 42 468.6 43 469.4C42 471.2 40.4 471.6 39.2 471.6C37 477 31 482.8 21 482.8C15 482.8 11 478 10.8 470.6Z" fill="#c5c5b8"/>
<rect x="13.2" y="467.2" width="3.4" height="3.1" fill="#c5c5b8"/>
<rect x="17.3" y="467.2" width="3.4" height="3.1" fill="#c5c5b8"/>
<rect x="21.3" y="467.2" width="3.4" height="3.1" fill="#c5c5b8"/>
<rect x="25.3" y="467.2" width="3.4" height="3.1" fill="#c5c5b8"/>
<rect x="29.3" y="467.2" width="3.4" height="3.1" fill="#c5c5b8"/>
<rect x="17.3" y="463.3" width="3.4" height="3.1" fill="#c5c5b8"/>
<rect x="21.3" y="463.3" width="3.4" height="3.1" fill="#c5c5b8"/>
<rect x="25.3" y="463.3" width="3.4" height="3.1" fill="#c5c5b8"/>
<rect x="25.3" y="459.6" width="3.4" height="3.1" fill="#c5c5b8"/>
<path d="M23.19 690.92L23.54 687.44L28.46 687.44L28.81 690.92L30.51 691.62L33.21 689.41L36.69 692.89L34.48 695.59L35.18 697.29L38.66 697.64L38.66 702.56L35.18 702.91L34.48 704.61L36.69 707.31L33.21 710.79L30.51 708.58L28.81 709.28L28.46 712.76L23.54 712.76L23.19 709.28L21.49 708.58L18.79 710.79L15.31 707.31L17.52 704.61L16.82 702.91L13.34 702.56L13.34 697.64L16.82 697.29L17.52 695.59L15.31 692.89L18.79 689.41L21.49 691.62Z" fill="#c5c5b8"/>
<circle cx="26" cy="700.1" r="3.6" fill="#333333"/>
<circle cx="35.6" cy="711" r="12" fill="#333333"/>
<circle cx="35.6" cy="711" r="10.8" fill="#1a85d2"/>
<path d="M36.4 707.2V715.8M36.4 707.4L33.6 709.6" fill="none" stroke="#ffffff" stroke-width="1.5"/>
<path d="M224.6 47.4L232.2 55M232.2 47.4L224.6 55" stroke="#f0f0f0" stroke-width="2.1"/>
<circle cx="309.3" cy="14.4" r="1.45" fill="#c4c4c4"/>
<circle cx="314.7" cy="14.4" r="1.45" fill="#c4c4c4"/>
<circle cx="320.1" cy="14.4" r="1.45" fill="#c4c4c4"/>
<circle cx="901.7" cy="45.8" r="1.6" fill="none" stroke="#c8c8c8" stroke-width="1.1"/>
<path d="M901.7 47.4V54.5Q901.7 57.4 904.6 57.4H907.5M905.9 55.6L907.7 57.4L905.9 59.2" fill="none" stroke="#c8c8c8" stroke-width="1.3"/>
<circle cx="913.6" cy="57.2" r="1.6" fill="none" stroke="#c8c8c8" stroke-width="1.1"/>
<path d="M913.6 55.6V48.5Q913.6 45.5 910.6 45.5H908M909.6 43.7L907.8 45.5L909.6 47.3" fill="none" stroke="#c8c8c8" stroke-width="1.3"/>
<rect x="937" y="45.2" width="15.3" height="12.6" fill="none" stroke="#c8c8c8" stroke-width="1.5"/>
<rect x="936.3" y="44.5" width="16.7" height="2.4" fill="#c8c8c8"/>
<path d="M944.7 45V58" stroke="#c8c8c8" stroke-width="1.5"/>
<circle cx="976.8" cy="50.7" r="1.5" fill="#c8c8c8"/>
<circle cx="982.7" cy="50.7" r="1.5" fill="#c8c8c8"/>
<circle cx="988.7" cy="50.7" r="1.5" fill="#c8c8c8"/>
<path d="M739.2 77.8L743.9 82.5L739.2 87.2L734.5 82.5Z" fill="#e8a33c"/>
<path d="M746.4 81.8L749.6 85L746.4 88.2L743.2 85Z" fill="#e8a33c"/>
<path d="M746.4 87.3L749.6 90.5L746.4 93.7L743.2 90.5Z" fill="#e8a33c"/>
<path d="M741 84.6H744.2V90.5" fill="none" stroke="#e8a33c" stroke-width="1.4"/>
<path d="M867.6 78.3L874.2 81.7V88.8L867.6 92.2L861 88.8V81.7Z" fill="none" stroke="#c5c5c5" stroke-width="1.2" stroke-linejoin="round"/>
<path d="M861 81.7L867.6 85.2L874.2 81.7M867.6 85.2V92" fill="none" stroke="#c5c5c5" stroke-width="1.2"/>
<path d="M11.5 740.4L15.7 744L11.5 747.6M22.4 737.4L18.3 741L22.4 744.6" fill="none" stroke="#ffffff" stroke-width="2.1"/>
<circle cx="48.4" cy="737.6" r="1.7" fill="none" stroke="#ffffff" stroke-width="1.3"/>
<circle cx="54.8" cy="739.8" r="1.7" fill="none" stroke="#ffffff" stroke-width="1.3"/>
<circle cx="48.4" cy="747.6" r="1.7" fill="none" stroke="#ffffff" stroke-width="1.3"/>
<path d="M48.4 739.3V745.9M54.8 741.5Q54.8 744.3 48.6 745" fill="none" stroke="#ffffff" stroke-width="1.5"/>
<path d="M148.09 741.28A5.2 5.2 0 0 0 138.00 743.40M138.31 744.92A5.2 5.2 0 0 0 148.40 742.80" fill="none" stroke="#ffffff" stroke-width="1.8"/><path d="M150.20 737.40V742.88H144.76Z" fill="#ffffff"/><path d="M136.20 748.80V743.32H141.64Z" fill="#ffffff"/>
<circle cx="176.2" cy="742.6" r="7.3" fill="#ffffff"/>
<path d="M172.6 739L179.8 746.2M179.8 739L172.6 746.2" stroke="#0b7fcd" stroke-width="1.6"/>
<path d="M215.8 735.6L223.8 750H207.8Z" fill="#ffffff"/>
<path d="M215.8 740V745.3M215.8 746.6V748.2" stroke="#0b7fcd" stroke-width="1.6"/>
<path d="M916.59 741.48A5.2 5.2 0 0 0 906.50 743.60M906.81 745.12A5.2 5.2 0 0 0 916.90 743.00" fill="none" stroke="#ffffff" stroke-width="1.8"/><path d="M918.70 737.60V743.08H913.26Z" fill="#ffffff"/><path d="M904.70 749.00V743.52H910.14Z" fill="#ffffff"/>
<circle cx="944.8" cy="742.8" r="7.4" fill="#ffffff"/>
<circle cx="942.2" cy="740.6" r="1" fill="#0b7fcd"/><circle cx="947.4" cy="740.6" r="1" fill="#0b7fcd"/>
<path d="M941.3 744.3Q944.8 747.6 948.3 744.3" fill="none" stroke="#0b7fcd" stroke-width="1.1"/>
<path d="M978.5 735.6C982.6 735.6 983.4 739.5 983.4 742.5V746L985.7 748.3H971.3L973.6 746V742.5C973.6 739.5 974.4 735.6 978.5 735.6Z" fill="#ffffff"/>
<path d="M976.6 748.8H980.4V750H976.6Z" fill="#ffffff"/></svg>
</body></html>
